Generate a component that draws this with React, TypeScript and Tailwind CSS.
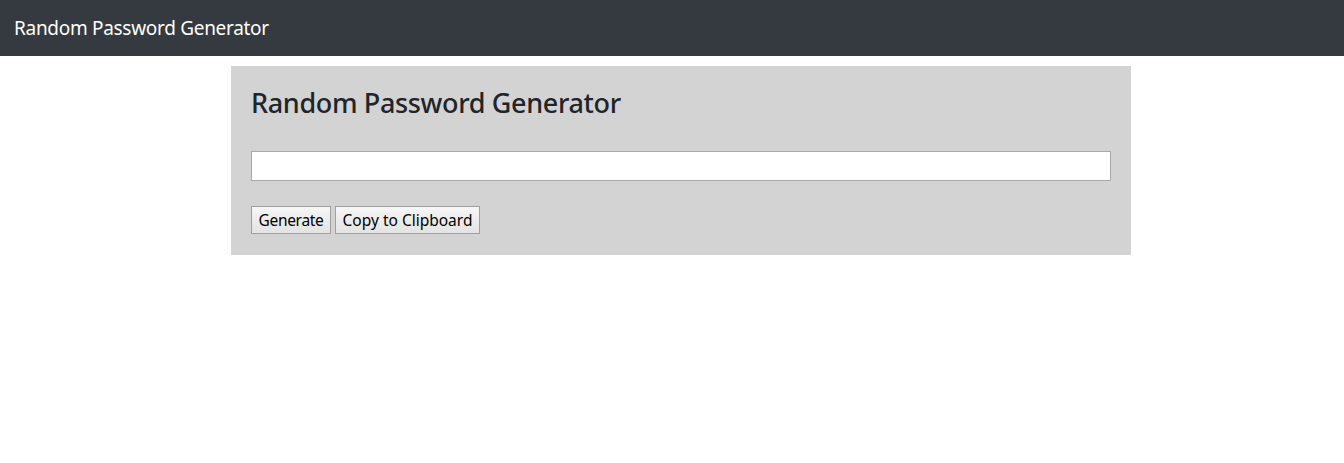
export default function App() {
  return (
    <div className="min-h-[463px] bg-white" style={{ fontFamily: '"Noto Sans", "Open Sans", sans-serif' }}>
      <nav className="h-[56px] bg-[#343a40] flex items-center px-[14px]">
        <span className="text-white text-[19px] tracking-[-0.3px]">Random Password Generator</span>
      </nav>
      <div className="flex justify-center pt-[10px] pl-[18px]">
        <div className="w-[900px] bg-[#d3d3d3] px-[20px] pt-[20px] pb-[21px]">
          <h3 className="text-[#212529] text-[27px] font-medium leading-[34px] tracking-[-0.35px] mb-[31px]">Random Password Generator</h3>
          <input type="text" className="block w-full h-[30px] bg-white border border-[#a9a9a9] outline-none" />
          <div className="flex gap-[4px] mt-[25px]">
            <button className="h-[28px] w-[80px] pt-[1px] border border-[#a0a0a0] bg-gradient-to-b from-[#f6f6f6] to-[#e3e3e3] text-[15.5px] tracking-[-0.3px] text-black">Generate</button>
            <button className="h-[28px] w-[145px] pt-[1px] border border-[#a0a0a0] bg-gradient-to-b from-[#f6f6f6] to-[#e3e3e3] text-[15.5px] text-black">Copy to Clipboard</button>
          </div>
        </div>
      </div>
    </div>
  );
}
